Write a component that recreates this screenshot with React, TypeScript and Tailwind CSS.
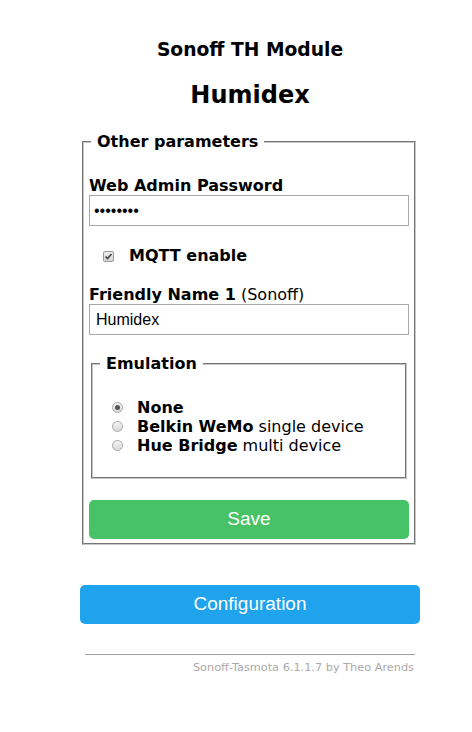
export default function App() {
  return (
    <div className="w-[472px] min-h-[732px] bg-white text-black font-['DejaVu_Sans',Verdana,sans-serif]">
      <div className="ml-[80px] w-[340px] pt-[38px]">
        <h3 className="text-center text-[18.7px] font-bold leading-[24px]">Sonoff TH Module</h3>
        <h2 className="mt-[18px] text-center text-[24px] font-bold leading-[30px]">Humidex</h2>

        <fieldset className="mt-[22px] mx-[2px] w-[334px] border-2 [border-style:groove] border-[#c8c8c8] px-[5px] pb-[4px]">
          <legend className="ml-[2px] px-[6px] text-[16px] font-bold leading-[20px]">Other parameters</legend>

          <div className="mt-[25px] text-[16px] font-bold leading-[18px]">Web Admin Password</div>
          <input
            type="password"
            value="********"
            readOnly
            className="block w-full h-[31px] border border-[#a9a9a9] px-[4px] text-[16px] font-['Liberation_Sans',Arial,sans-serif] outline-none"
          />

          <label className="mt-[20px] flex h-[20px] items-center pl-[14px]">
            <CheckBox />
            <b className="ml-[15px] text-[16px] leading-[20px]">MQTT enable</b>
          </label>

          <div className="mt-[20px] text-[16px] leading-[18px]">
            <b>Friendly Name 1</b> (Sonoff)
          </div>
          <input
            type="text"
            value="Humidex"
            readOnly
            className="block w-full h-[31px] border border-[#a9a9a9] px-[6px] text-[16px] font-['Liberation_Sans',Arial,sans-serif] outline-none"
          />

          <fieldset className="mt-[19px] mx-[2px] border-2 [border-style:groove] border-[#c8c8c8] px-[5px] pb-[22px]">
            <legend className="ml-[2px] px-[6px] text-[16px] font-bold leading-[20px]">Emulation</legend>
            <div className="mt-[24px] flex flex-col pl-[14px]">
              <RadioRow checked bold="None" />
              <RadioRow bold="Belkin WeMo" rest=" single device" />
              <RadioRow bold="Hue Bridge" rest=" multi device" />
            </div>
          </fieldset>

          <button className="mt-[21px] block h-[39px] w-full rounded-[5px] bg-[#47c266] text-[19px] text-white font-['Liberation_Sans',Arial,sans-serif]">
            Save
          </button>
        </fieldset>

        <button className="mt-[40px] block h-[39px] w-full rounded-[5px] bg-[#1fa3ec] text-[19px] text-white font-['Liberation_Sans',Arial,sans-serif]">
          Configuration
        </button>

        <div className="mt-[30px] mx-[5px] h-px bg-[#a0a0a0]" />
        <div className="mt-[6px] pr-[6px] text-right text-[11.3px] leading-[14px] text-[#aaaaaa]">
          Sonoff-Tasmota 6.1.1.7 by Theo Arends
        </div>
      </div>
    </div>
  );
}

function CheckBox() {
  return (
    <span className="flex h-[11px] w-[11px] items-center justify-center rounded-[2px] border border-[#9a9a9a] bg-gradient-to-b from-[#f0f0f0] to-[#d4d4d4]">
      <svg width="9" height="9" viewBox="0 0 9 9">
        <path d="M1.5 4.5 L3.5 6.5 L7.5 2" fill="none" stroke="#444" strokeWidth="1.6" />
      </svg>
    </span>
  );
}

function RadioRow({ checked = false, bold, rest }: { checked?: boolean; bold: string; rest?: string }) {
  return (
    <label className="flex h-[19px] items-center text-[16px] leading-[19px]">
      <span className="flex h-[11px] w-[11px] items-center justify-center rounded-full border border-[#a8a8a8] bg-gradient-to-b from-[#f4f4f4] to-[#d8d8d8]">
        {checked ? <span className="h-[5px] w-[5px] rounded-full bg-[#555]" /> : null}
      </span>
      <span className="ml-[14px]">
        <b>{bold}</b>
        {rest}
      </span>
    </label>
  );
}
